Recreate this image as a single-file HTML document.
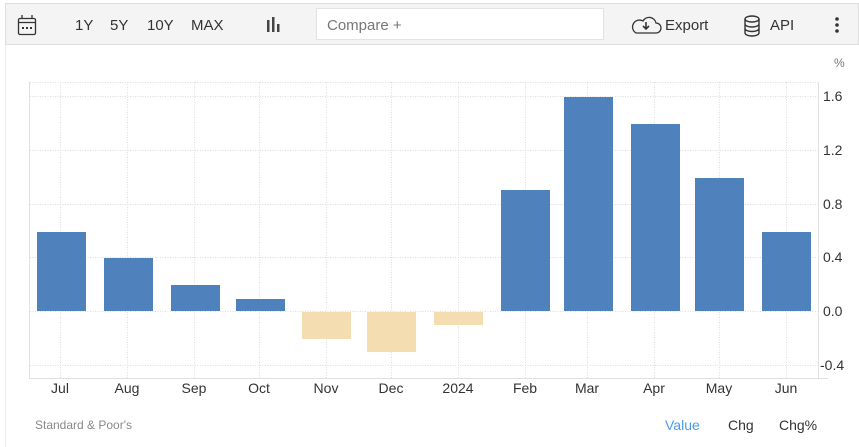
<!DOCTYPE html>
<html><head><meta charset="utf-8"><style>
*{margin:0;padding:0;box-sizing:border-box}
body{width:859px;height:447px;background:#fff;font-family:"Liberation Sans",Arial,sans-serif;position:relative;overflow:hidden}
.tb{position:absolute;left:5px;top:3px;width:854px;height:42px;background:#f4f4f4;border:1px solid #ddd}
.t{position:absolute;top:17px;font-size:15px;color:#333}
.cmp{position:absolute;left:316px;top:8px;width:288px;height:32px;background:#fff;border:1px solid #e2e2e2;font-size:15px;color:#777;padding:8px 10px}
.vl{position:absolute;left:5px;top:45px;width:1px;height:402px;background:#eee}
</style></head><body>
<div class="tb"></div>
<div class="vl"></div>
<svg style="position:absolute;left:0;top:0" width="859" height="447">
<g fill="none" stroke="#333" stroke-width="1.3">
<rect x="18.5" y="18.5" width="17" height="16" rx="1.5"/>
<line x1="18.5" y1="22.5" x2="35.5" y2="22.5"/>
<line x1="22" y1="15" x2="22" y2="19"/><line x1="32" y1="15" x2="32" y2="19"/>
</g>
<g fill="#333"><rect x="22" y="27" width="2" height="2"/><rect x="26" y="27" width="2" height="2"/><rect x="30" y="27" width="2" height="2"/></g>
<g fill="#444"><rect x="267" y="20" width="2.5" height="12"/><rect x="272" y="17" width="2.5" height="15"/><rect x="277" y="24" width="2.5" height="8"/></g>
<path d="M636 33 h20 a5 5 0 0 0 0-10 a7 7 0 0 0-13-2 a6 6 0 0 0-7 12z" fill="none" stroke="#333" stroke-width="1.3"/>
<path d="M646 22 v7 M643 26 l3 3 3-3" fill="none" stroke="#333" stroke-width="1.6"/>
<g fill="none" stroke="#333" stroke-width="1.4">
<ellipse cx="752" cy="19" rx="7" ry="3"/>
<path d="M745 19 v14 a7 3 0 0 0 14 0 v-14 M745 24 a7 3 0 0 0 14 0 M745 28.5 a7 3 0 0 0 14 0"/>
</g>
<g fill="#333"><circle cx="837" cy="19" r="1.8"/><circle cx="837" cy="25" r="1.8"/><circle cx="837" cy="31" r="1.8"/></g>
<g stroke="#ddd" stroke-dasharray="1,1.5" stroke-width="1">
<line x1="30" y1="82.5" x2="818" y2="82.5"/>
<line x1="30" y1="96.5" x2="818" y2="96.5"/>
<line x1="30" y1="150.5" x2="818" y2="150.5"/>
<line x1="30" y1="204.5" x2="818" y2="204.5"/>
<line x1="30" y1="257.5" x2="818" y2="257.5"/>
<line x1="30" y1="311.5" x2="818" y2="311.5"/>
<line x1="30" y1="365.5" x2="818" y2="365.5"/>
<line x1="60.5" y1="82" x2="60.5" y2="378"/><line x1="127.5" y1="82" x2="127.5" y2="378"/>
<line x1="194.5" y1="82" x2="194.5" y2="378"/><line x1="259.5" y1="82" x2="259.5" y2="378"/>
<line x1="326.5" y1="82" x2="326.5" y2="378"/><line x1="391.5" y1="82" x2="391.5" y2="378"/>
<line x1="458.5" y1="82" x2="458.5" y2="378"/><line x1="525.5" y1="82" x2="525.5" y2="378"/>
<line x1="587.5" y1="82" x2="587.5" y2="378"/><line x1="654.5" y1="82" x2="654.5" y2="378"/>
<line x1="719.5" y1="82" x2="719.5" y2="378"/><line x1="786.5" y1="82" x2="786.5" y2="378"/>
</g>
<g stroke="#e0e0e0"><line x1="29.5" y1="82" x2="29.5" y2="379"/><line x1="29" y1="378.5" x2="828" y2="378.5"/><line x1="818.5" y1="82" x2="818.5" y2="379"/></g>
<g fill="#4f81bd">
<rect x="37" y="232" width="49" height="79"/><rect x="104" y="258" width="49" height="53"/>
<rect x="171" y="285" width="49" height="26"/><rect x="236" y="299" width="49" height="12"/>
<rect x="501" y="190" width="49" height="121"/><rect x="564" y="97" width="49" height="214"/>
<rect x="631" y="124" width="49" height="187"/><rect x="695" y="178" width="49" height="133"/>
<rect x="762" y="232" width="49" height="79"/>
</g>
<g fill="#f5ddb2">
<rect x="302" y="312" width="49" height="27"/><rect x="367" y="312" width="49" height="40"/><rect x="434" y="312" width="49" height="13"/>
</g>
<g font-size="14" fill="#333" font-family="Liberation Sans,Arial,sans-serif">
<text x="823" y="101">1.6</text><text x="823" y="155">1.2</text><text x="823" y="209">0.8</text>
<text x="823" y="262">0.4</text><text x="823" y="316">0.0</text><text x="820" y="370">-0.4</text>
<text x="834" y="67" font-size="12" fill="#777">%</text>
</g>
<g font-size="14" fill="#333" text-anchor="middle" font-family="Liberation Sans,Arial,sans-serif">
<text x="60" y="393">Jul</text><text x="127" y="393">Aug</text><text x="194" y="393">Sep</text>
<text x="259" y="393">Oct</text><text x="326" y="393">Nov</text><text x="391" y="393">Dec</text>
<text x="458" y="393">2024</text><text x="525" y="393">Feb</text><text x="587" y="393">Mar</text>
<text x="654" y="393">Apr</text><text x="719" y="393">May</text><text x="786" y="393">Jun</text>
</g>
<text x="35" y="429" font-size="12" fill="#888" font-family="Liberation Sans,Arial,sans-serif">Standard &amp; Poor's</text>
<g font-size="14" font-family="Liberation Sans,Arial,sans-serif">
<text x="665" y="430" fill="#4a9af0">Value</text><text x="728" y="430" fill="#333">Chg</text><text x="779" y="430" fill="#333">Chg%</text>
</g>
</svg>
<div class="t" style="left:75px">1Y</div>
<div class="t" style="left:110px">5Y</div>
<div class="t" style="left:147px">10Y</div>
<div class="t" style="left:191px">MAX</div>
<div class="cmp">Compare +</div>
<div class="t" style="left:665px">Export</div>
<div class="t" style="left:770px">API</div>
</body></html>
